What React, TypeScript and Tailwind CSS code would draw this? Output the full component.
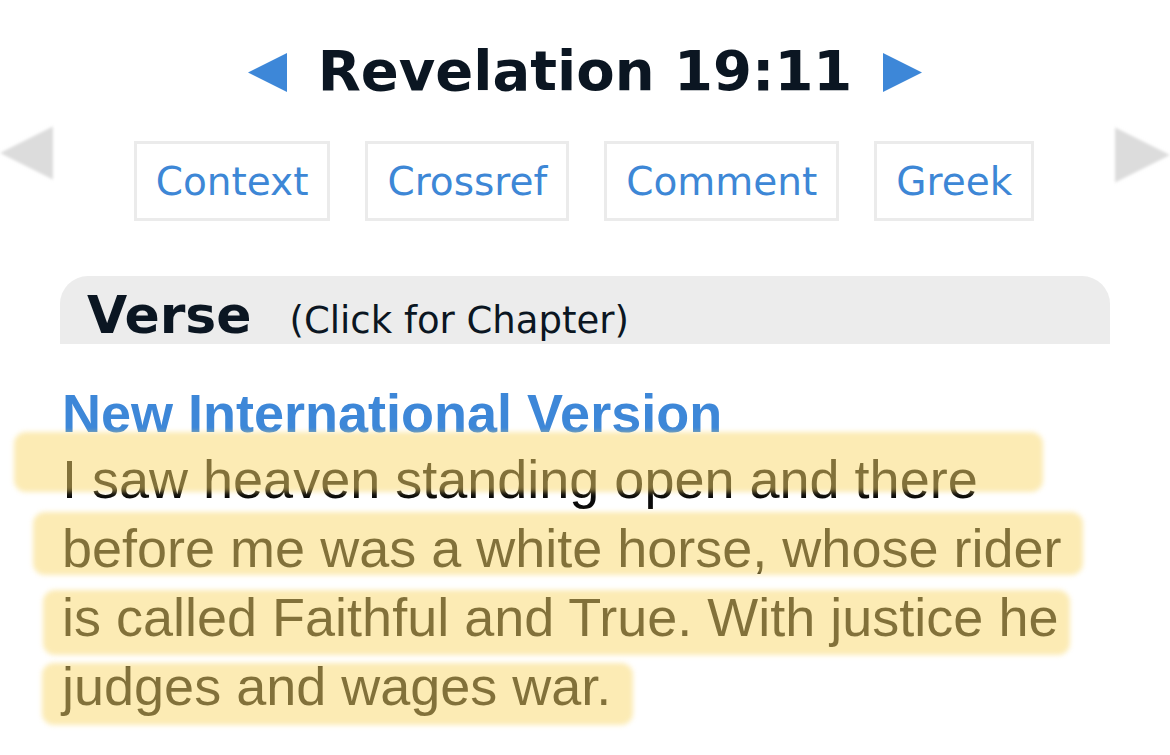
import React from 'react';

const buttons = ['Context', 'Crossref', 'Comment', 'Greek'];

// each line carries its own marker stroke, laid over the text
const lines = [
  { text: 'I saw heaven standing open and there', mark: 'left-[-48px] top-[-13px] w-[1029px] h-[60px]' },
  { text: 'before me was a white horse, whose rider', mark: 'left-[-29px] top-[-2px] w-[1050px] h-[63px]' },
  { text: 'is called Faithful and True. With justice he', mark: 'left-[-19px] top-[7px] w-[1027px] h-[65px]' },
  { text: 'judges and wages war.', mark: 'left-[-20px] top-[11px] w-[591px] h-[62px]' },
];

function Tri({ dir, className }: { dir: 'left' | 'right'; className: string }) {
  return (
    <svg viewBox="0 0 40 40" className={className}>
      {dir === 'left' ? <path d="M0 20 L40 0 L40 40 Z" /> : <path d="M40 20 L0 0 L0 40 Z" />}
    </svg>
  );
}

export default function App() {
  return (
    <div className="w-[1170px] h-[755px] bg-white overflow-hidden">
      <div className="flex items-center justify-center gap-[31px] pt-[43px]">
        <Tri dir="left" className="w-[39px] h-[39px] fill-[#3d87d8] mt-[2px]" />
        <h1 className="text-[56px] leading-none font-bold text-[#0b1622] [font-family:'DejaVu_Sans',sans-serif]">
          Revelation 19:11
        </h1>
        <Tri dir="right" className="w-[39px] h-[39px] fill-[#3d87d8] mt-[2px]" />
      </div>

      <div className="flex justify-between items-start mt-[24px]">
        <Tri dir="left" className="w-[53px] h-[60px] fill-[#dcdcdc] blur-[1.5px]" />
        <div className="flex gap-[35px] mt-[18px]">
          {buttons.map(b => (
            <div
              key={b}
              className="h-[80px] px-[19px] border-[3px] border-[#ebebeb] flex items-center text-[39px] leading-none text-[#3d87d6] [font-family:'DejaVu_Sans',sans-serif]"
            >
              {b}
            </div>
          ))}
        </div>
        <Tri dir="right" className="w-[55px] h-[60px] fill-[#dcdcdc] blur-[1.5px] mt-[2px]" />
      </div>

      <div className="mx-[60px] mt-[55px] h-[68px] bg-[#ececec] rounded-t-[28px] flex items-baseline pl-[27px] pt-[13px] [font-family:'DejaVu_Sans',sans-serif]">
        <span className="text-[52px] font-bold leading-none text-[#0b1622]">Verse</span>
        <span className="ml-[38px] text-[37px] leading-none text-[#0b1622]">(Click for Chapter)</span>
      </div>

      <div className="px-[62px] [font-family:'Liberation_Sans',Arial,sans-serif]">
        <h2 className="mt-[42px] text-[54px] font-bold leading-none text-[#3d87d8]">New International Version</h2>
        <div className="mt-[5px] text-[54px] leading-[69px] text-[#0a0a0a]">
          {lines.map(l => (
            <div key={l.text} className="relative whitespace-nowrap">
              {l.text}
              <span className={`absolute rounded-[12px] bg-[rgba(250,216,105,0.5)] blur-[2.5px] ${l.mark}`} />
            </div>
          ))}
        </div>
      </div>
    </div>
  );
}
